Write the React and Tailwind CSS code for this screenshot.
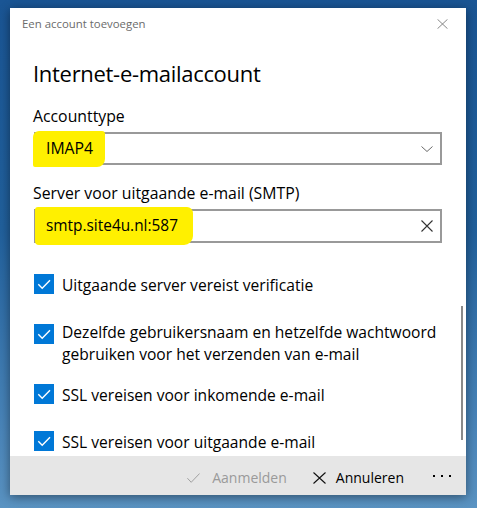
import React from "react";

const font = { fontFamily: '"Open Sans", "Noto Sans", sans-serif' };

function Check({ className }) {
  return (
    <svg viewBox="0 0 20 20" className={className}>
      <path d="M4.3 10.3 L8.2 14.2 L16 6.2" fill="none" stroke="white" strokeWidth="1.4" />
    </svg>
  );
}

function Box({ className = "" }) {
  return (
    <div className={"w-[20px] h-[20px] bg-[#0078d7] shrink-0 " + className}>
      <Check className="w-[20px] h-[20px]" />
    </div>
  );
}

function CheckRow({ children, className = "" }) {
  return (
    <div className={"flex items-start gap-[8px] " + className}>
      <Box />
      <div className="text-[15.6px] leading-[23px] text-black whitespace-nowrap">{children}</div>
    </div>
  );
}

export default function App() {
  return (
    <div
      className="w-[477px] h-[508px] overflow-hidden pt-[8px] pl-[10px] bg-[linear-gradient(180deg,#1a5594_0%,#21609c_45%,#4b86ba_85%,#5a93c2_100%)]"
      style={font}
    >
      <div className="w-[456px] h-[487px] bg-white flex flex-col shadow-[0_2px_10px_rgba(0,0,0,0.45)]">
        <div className="h-[32px] flex items-center justify-between pl-[12px] pr-[18px] shrink-0">
          <span className="text-[11.4px] text-[#6b6b6b] whitespace-nowrap">Een account toevoegen</span>
          <svg viewBox="0 0 11 10" className="w-[11px] h-[10px]">
            <path d="M0.5 0.3 L10.5 9.7 M10.5 0.3 L0.5 9.7" stroke="#7a7a7a" strokeWidth="0.9" fill="none" />
          </svg>
        </div>
        <div className="relative flex-1 overflow-hidden">
          <div className="pl-[23px] pr-[24px]">
            <div className="text-[22px] leading-[30px] text-black mt-[18px] tracking-[-0.3px] whitespace-nowrap">Internet-e-mailaccount</div>

            <div className="mt-[18px] text-[15.8px] leading-[20px] text-black">Accounttype</div>
            <div className="relative mt-[6px] ml-[1px] h-[33px] border-2 border-[#999999] flex items-center justify-between pl-[10px] pr-[7px]">
              <span className="absolute left-[-3px] top-[-3px] w-[72px] h-[36px] bg-[#fff000] rounded-[6px_3px_8px_2px]" />
              <span className="relative text-[15.8px] text-black">IMAP4</span>
              <svg viewBox="0 0 12 6" className="w-[12px] h-[6px]">
                <path d="M0.5 0.5 L6 5.5 L11.5 0.5" stroke="#6a6a6a" strokeWidth="1" fill="none" />
              </svg>
            </div>

            <div className="mt-[18px] text-[15.8px] leading-[20px] text-black whitespace-nowrap">Server voor uitgaande e-mail (SMTP)</div>
            <div className="relative mt-[6px] ml-[1px] h-[34px] border-2 border-[#999999] flex items-center justify-between pl-[10px] pr-[7px]">
              <span className="absolute left-[-1px] top-[-4px] w-[158px] h-[38px] bg-[#fff000] rounded-[3px_6px_9px_4px]" />
              <span className="relative text-[15.4px] text-black">smtp.site4u.nl:587</span>
              <svg viewBox="0 0 12 12" className="w-[12px] h-[12px]">
                <path d="M0.5 0.5 L11.5 11.5 M11.5 0.5 L0.5 11.5" stroke="#333" strokeWidth="1.1" fill="none" />
              </svg>
            </div>

            <CheckRow className="mt-[31px] ml-[1px]">Uitgaande server vereist verificatie</CheckRow>
            <div className="flex items-start gap-[8px] mt-[24px] ml-[1px]">
              <Box className="mt-[3px]" />
              <div className="text-[15.6px] leading-[22px] text-black whitespace-nowrap">
                Dezelfde gebruikersnaam en hetzelfde wachtwoord
                <br />
                gebruiken voor het verzenden van e-mail
              </div>
            </div>
            <CheckRow className="mt-[19px] ml-[1px]">SSL vereisen voor inkomende e-mail</CheckRow>
            <CheckRow className="mt-[24px] ml-[1px]">SSL vereisen voor uitgaande e-mail</CheckRow>
          </div>
          <div className="absolute right-[3px] top-[266px] w-[2px] h-[134px] bg-[#8a8a8a]" />
        </div>
        <div className="h-[39px] bg-[#e6e6e6] shrink-0 flex items-center justify-end pr-[15px] pt-[4px] text-[14px] leading-[20px]">
          <div className="flex items-center gap-[12px] text-[#9a9a9a]">
            <svg viewBox="0 0 13 10" className="w-[13px] h-[10px]">
              <path d="M0.4 5.2 L4.2 9.3 L12.6 0.5" stroke="#a0a0a0" strokeWidth="1" fill="none" />
            </svg>
            <span className="whitespace-nowrap">Aanmelden</span>
          </div>
          <div className="flex items-center gap-[10px] text-black ml-[26px]">
            <svg viewBox="0 0 13 12" className="w-[13px] h-[12px]">
              <path d="M0.5 0.5 L12.5 11.5 M12.5 0.5 L0.5 11.5" stroke="#111" strokeWidth="1.1" fill="none" />
            </svg>
            <span className="whitespace-nowrap">Annuleren</span>
          </div>
          <div className="flex items-center gap-[6px] ml-[29px] mb-[3px]">
            <span className="w-[2px] h-[2px] bg-black" />
            <span className="w-[2px] h-[2px] bg-black" />
            <span className="w-[2px] h-[2px] bg-black" />
          </div>
        </div>
      </div>
    </div>
  );
}
